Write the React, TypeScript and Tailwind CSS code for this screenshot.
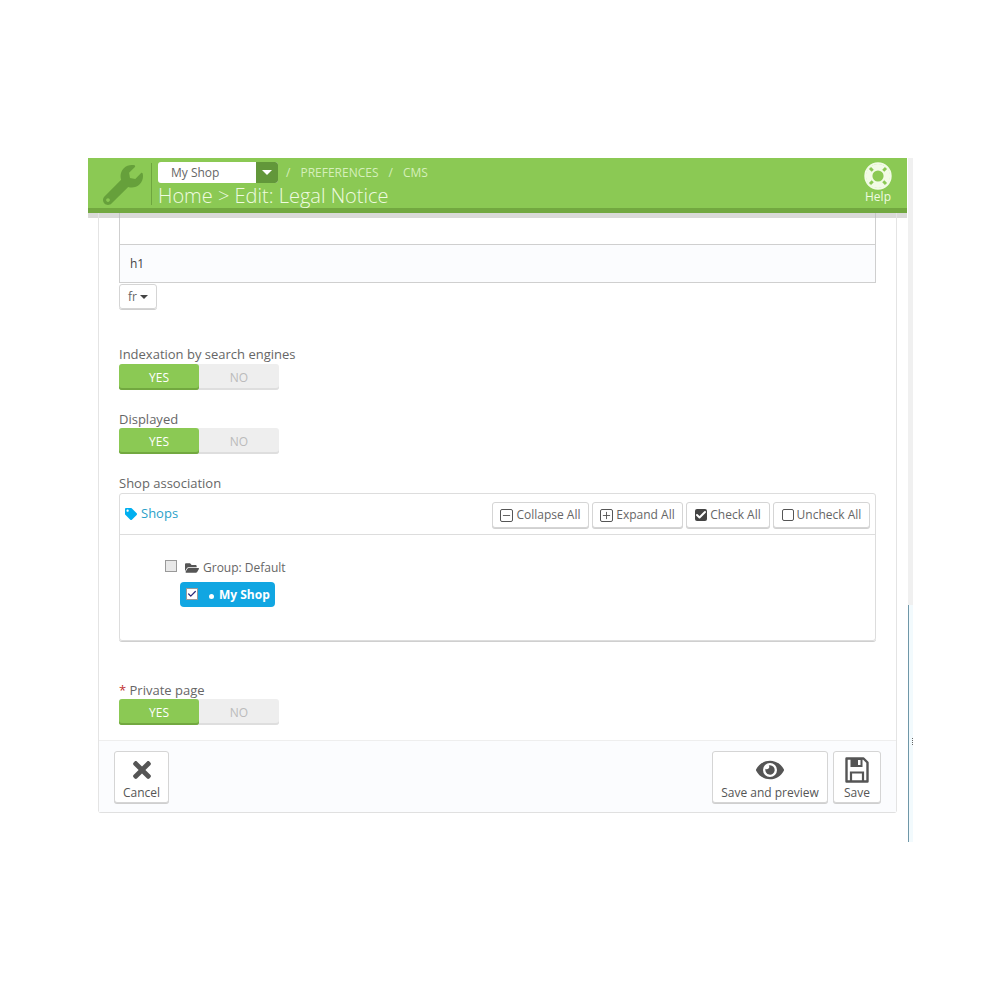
import { Check, Minus, Plus } from 'lucide-react';
import { FaEye, FaFolderOpen, FaTag, FaTimes, FaWrench } from 'react-icons/fa';
import type { ReactNode } from 'react';

function LifeRing() {
  return (
    <svg viewBox="0 0 28 28" className="h-7 w-7" fill="none">
      <circle cx="14" cy="14" r="12.7" stroke="#f2fbe6" strokeWidth="2" />
      <circle cx="14" cy="14" r="6.6" stroke="#f2fbe6" strokeWidth="2" />
      <circle cx="14" cy="14" r="9.6" stroke="#f2fbe6" strokeWidth="5" />
      <g stroke="#8bc954" strokeWidth="3">
        <path d="M8.7 8.7L6 6M19.3 8.7L22 6M8.7 19.3L6 22M19.3 19.3L22 22" />
      </g>
    </svg>
  );
}

function FloppyIcon() {
  return (
    <svg viewBox="0 0 24 26" className="h-[26px] w-6 text-[#555555]" fill="none">
      <path d="M1.5 1.5H18.5L22.5 5.5V24.5H1.5Z" stroke="currentColor" strokeWidth="2.4" strokeLinejoin="round" />
      <path d="M5.5 1.5H17.5V10H5.5ZM13 3V8H15.5V3Z" fill="currentColor" fillRule="evenodd" />
      <path d="M6 24.5V15.5H18V24.5" stroke="currentColor" strokeWidth="2.2" />
    </svg>
  );
}

function Toggle() {
  return (
    <div className="flex h-[26px] w-40 rounded-[3px] bg-[#eeeeee] text-xs shadow-[inset_0_-2px_0_#dedede]">
      <div className="flex w-20 items-center justify-center rounded-[3px] bg-[#8bc954] pt-px text-white shadow-[inset_0_-2px_0_#72a840]">
        YES
      </div>
      <div className="flex w-20 items-center justify-center pt-px text-[#bbbbbb]">NO</div>
    </div>
  );
}

function TreeButton({ icon, label, width }: { icon: ReactNode; label: string; width: string }) {
  return (
    <div
      className={`flex h-[26px] items-center justify-center gap-[3px] rounded-[3px] border border-[#d5d5d5] bg-white text-xs text-[#666666] shadow-[0_1px_0_#d0d0d0] ${width}`}
    >
      {icon}
      {label}
    </div>
  );
}

function ActionButton({ icon, label, width }: { icon: ReactNode; label: string; width: string }) {
  return (
    <div
      className={`flex h-[52px] flex-col items-center justify-end rounded-[3px] border border-[#d5d5d5] bg-white pb-[1px] text-xs text-[#555555] shadow-[0_1px_0_#cfcfcf] ${width}`}
    >
      {icon}
      <span className="mt-[2px]">{label}</span>
    </div>
  );
}

export default function App() {
  return (
    <div className="h-[1000px] w-[1000px] overflow-hidden bg-white pl-[88px] pt-[158px] font-['Open_Sans',sans-serif] text-[13px] text-[#666666]">
      <div className="flex w-[825px]">
        <div className="w-[819px]">
          <header className="flex h-[55px] items-start border-b-[5px] border-[#72a840] bg-[#8bc954]">
            <div className="flex w-[63px] justify-end pr-[8px] pt-[7px]">
              <FaWrench className="h-10 w-10 text-[#66a03b]" />
            </div>
            <div className="mt-[5px] h-[42px] border-l border-[#6ea63f]" />
            <div className="ml-[6px] flex-1 pt-[4px]">
              <div className="flex h-[21px] items-center">
                <div className="flex h-[21px] w-[120px] items-center justify-between rounded-[3px] bg-white pl-[13px] text-xs text-[#666666]">
                  My Shop
                  <div className="flex h-[21px] w-[22px] items-center justify-center rounded-r-[3px] bg-[#62973a]">
                    <div className="h-0 w-0 border-x-[5px] border-t-[5px] border-x-transparent border-t-white" />
                  </div>
                </div>
                <div className="ml-[8px] mt-px flex gap-[10px] text-xs text-[#d5efbb]">
                  <span>/</span>
                  <span>PREFERENCES</span>
                  <span>/</span>
                  <span>CMS</span>
                </div>
              </div>
              <div className="-mt-[2px] text-xl font-light leading-[30px] text-[#effbe0]">Home &gt; Edit: Legal Notice</div>
            </div>
            <div className="flex w-[58px] flex-col items-center pt-[4px] text-xs leading-[14px] text-[#effbe0]">
              <LifeRing />
              Help
            </div>
          </header>
          <div className="h-[5px] bg-[#dadad8]">
            <div className="ml-[10px] h-full w-[799px] border-x border-[#e4e4e4]">
              <div className="ml-[20px] h-full w-[757px] border-x border-[#c4c4c4]" />
            </div>
          </div>

          <div className="ml-[10px] h-[595px] w-[799px] rounded-b-[3px] border-x border-b-2 border-[#e4e4e4] border-b-[#e0e0e0]">
            <div className="ml-[20px] h-[65px] w-[757px] border-x border-b border-[#cfcfcf] pt-[26px]">
              <div className="flex h-[38px] items-center border-t border-[#cfcfcf] bg-[#fbfcfe] pl-[10px] text-xs text-[#444444]">
                h1
              </div>
            </div>
            <div className="ml-[20px] mt-[1px] flex h-[25px] w-[38px] items-center justify-center gap-[3px] rounded-[3px] border border-[#d5d5d5] text-xs shadow-[0_1px_0_#cfcfcf]">
              fr
              <div className="h-0 w-0 border-x-[4px] border-t-[4px] border-x-transparent border-t-[#444444]" />
            </div>

            <div className="px-[20px]">
              <div className="mt-[36px] leading-[18px]">Indexation by search engines</div>
              <div className="mt-[1px]">
                <Toggle />
              </div>
              <div className="mt-[20px] leading-[18px]">Displayed</div>
              <Toggle />
              <div className="mt-[20px] leading-[18px]">Shop association</div>

              <div className="mt-[1px] h-[148px] rounded-[3px] border border-[#dddddd] shadow-[0_1px_0_#cfcfcf]">
                <div className="flex h-[41px] items-center justify-between border-b border-[#dddddd] pl-[5px] pr-[5px]">
                  <div className="flex items-center gap-1 text-[#2a9fc9]">
                    <FaTag className="h-3 w-3 text-[#00aff0]" />
                    Shops
                  </div>
                  <div className="mt-[2px] flex gap-[3px]">
                    <TreeButton width="w-[97px]" label="Collapse All" icon={<Minus className="h-[13px] w-[13px] rounded-[2px] border border-[#555555] text-[#555555]" />} />
                    <TreeButton width="w-[91px]" label="Expand All" icon={<Plus className="h-[13px] w-[13px] rounded-[2px] border border-[#555555] text-[#555555]" />} />
                    <TreeButton width="w-[84px]" label="Check All" icon={<Check className="h-3 w-3 rounded-[2px] bg-[#444444] text-white" strokeWidth={4} />} />
                    <TreeButton width="w-[97px]" label="Uncheck All" icon={<div className="h-3 w-3 rounded-[2px] border border-[#555555]" />} />
                  </div>
                </div>
                <div className="pl-[45px] pt-[23px]">
                  <div className="flex h-5 items-center text-xs text-[#666666]">
                    <div className="-mt-[4px] h-3 w-3 border border-[#999999] bg-[#e8e8e8]" />
                    <FaFolderOpen className="ml-[8px] mr-[4px] h-[14px] w-[14px] text-[#555555]" />
                    Group: Default
                  </div>
                  <div className="ml-[15px] mt-[4px] flex h-[25px] w-[95px] rounded-[4px] bg-[#11a6e2] pl-[6px] text-xs font-bold text-white">
                    <div className="mt-[6px] flex h-3 w-3 items-center justify-center border border-[#999999] bg-white">
                      <Check className="h-3 w-3 text-[#2a2a7a]" strokeWidth={3} />
                    </div>
                    <div className="ml-[11px] mr-[5px] mt-[12px] h-[5px] w-[5px] rounded-full bg-white" />
                    <span className="mt-[5px]">My Shop</span>
                  </div>
                </div>
              </div>

              <div className="mt-[40px] leading-[18px]">
                <span className="text-[#c03030]">*</span> Private page
              </div>
              <Toggle />
            </div>

            <div className="mt-[15px] flex h-[72px] justify-between border-t border-[#eeeeee] bg-[#fbfcfe] px-[15px] pt-[10px]">
              <ActionButton width="w-[55px]" label="Cancel" icon={<FaTimes className="h-[26px] w-[22px] text-[#555555]" />} />
              <div className="flex gap-[5px]">
                <ActionButton width="w-[116px]" label="Save and preview" icon={<FaEye className="h-[26px] w-[28px] text-[#555555]" />} />
                <ActionButton width="w-[48px]" label="Save" icon={<FloppyIcon />} />
              </div>
            </div>
          </div>
        </div>

        <div className="ml-[1px] w-[5px]">
          <div className="h-[447px] bg-[#f0f0f0]" />
          <div className="flex h-[237px] justify-end border-l border-[#6f97a8] bg-[#f2fafd] pt-[133px]">
            <div className="h-[7px] border-r border-dotted border-[#666666]" />
          </div>
        </div>
      </div>
    </div>
  );
}
